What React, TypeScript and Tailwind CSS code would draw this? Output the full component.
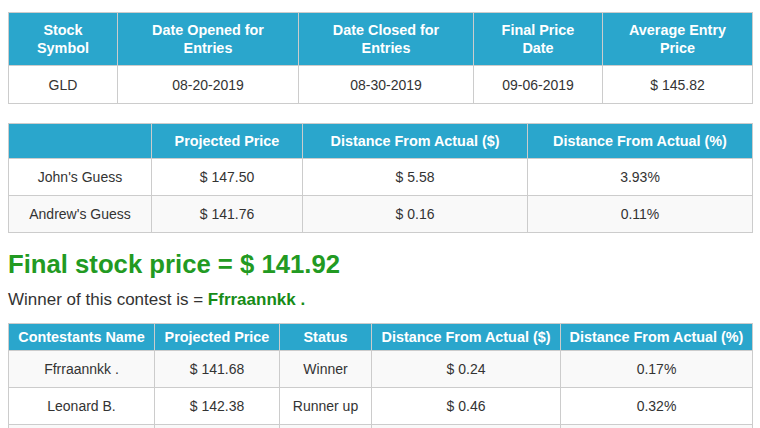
const th = 'border border-[#cccccc] bg-[#2aa6cc] text-white font-bold text-[14.4px] leading-[18px] text-center align-middle';
const td = 'border border-[#cccccc] text-[#333333] text-[14px] leading-[20px] text-center align-middle';

const summaryHead = [
  ['Stock', 'Symbol'],
  ['Date Opened for', 'Entries'],
  ['Date Closed for', 'Entries'],
  ['Final Price', 'Date'],
  ['Average Entry', 'Price'],
];
const summaryWidths = ['w-[109px]', 'w-[181px]', 'w-[175px]', 'w-[129px]', 'w-[150px]'];
const summaryRow = ['GLD', '08-20-2019', '08-30-2019', '09-06-2019', '$ 145.82'];

const guesses = [
  ["John's Guess", '$ 147.50', '$ 5.58', '3.93%'],
  ["Andrew's Guess", '$ 141.76', '$ 0.16', '0.11%'],
];

const contestants = [
  ['Ffrraannkk .', '$ 141.68', 'Winner', '$ 0.24', '0.17%'],
  ['Leonard B.', '$ 142.38', 'Runner up', '$ 0.46', '0.32%'],
  ['', '', '', '', ''],
];

export default function App() {
  return (
    <div className="w-[760px] h-[428px] overflow-hidden bg-white px-2 pt-3 font-['Liberation_Sans',Arial,sans-serif]">
      {/* Stock summary */}
      <table className="w-[744px] border-collapse table-fixed">
        <thead>
          <tr className="h-[53px]">
            {summaryHead.map((h, i) => (
              <th key={i} className={`${th} ${summaryWidths[i]}`}>
                {h[0]}
                <br />
                {h[1]}
              </th>
            ))}
          </tr>
        </thead>
        <tbody>
          <tr className="h-[38px] bg-white">
            {summaryRow.map((c, i) => (
              <td key={i} className={td}>{c}</td>
            ))}
          </tr>
        </tbody>
      </table>

      {/* Guesses */}
      <table className="mt-[19px] w-[744px] border-collapse table-fixed">
        <thead>
          <tr className="h-[35px]">
            <th className={`${th} w-[143px]`}></th>
            <th className={`${th} w-[151px]`}>Projected Price</th>
            <th className={`${th} w-[225px]`}>Distance From Actual ($)</th>
            <th className={`${th} w-[225px]`}>Distance From Actual (%)</th>
          </tr>
        </thead>
        <tbody>
          {guesses.map((r, i) => (
            <tr key={i} className={`h-[37px] ${i % 2 ? 'bg-[#f9f9f9]' : 'bg-white'}`}>
              {r.map((c, j) => (
                <td key={j} className={td}>{c}</td>
              ))}
            </tr>
          ))}
        </tbody>
      </table>

      <h2 className="mt-[17px] text-[25.7px] leading-[28px] font-bold text-[#229a22]">Final stock price = $ 141.92</h2>
      <p className="mt-[11px] text-[17px] leading-[22px] text-[#333333]">
        Winner of this contest is = <span className="font-bold text-[#178c17]">Ffrraannkk .</span>
      </p>

      {/* Contestants */}
      <table className="mt-[12px] w-[744px] border-collapse table-fixed">
        <thead>
          <tr className="h-[27px]">
            <th className={`${th} w-[146px]`}>Contestants Name</th>
            <th className={`${th} w-[125px]`}>Projected Price</th>
            <th className={`${th} w-[92px]`}>Status</th>
            <th className={`${th} w-[189px]`}>Distance From Actual ($)</th>
            <th className={`${th} w-[192px]`}>Distance From Actual (%)</th>
          </tr>
        </thead>
        <tbody>
          {contestants.map((r, i) => (
            <tr key={i} className={`h-[37px] ${i % 2 ? 'bg-white' : 'bg-[#f9f9f9]'}`}>
              {r.map((c, j) => (
                <td key={j} className={td}>{c}</td>
              ))}
            </tr>
          ))}
        </tbody>
      </table>
    </div>
  );
}
